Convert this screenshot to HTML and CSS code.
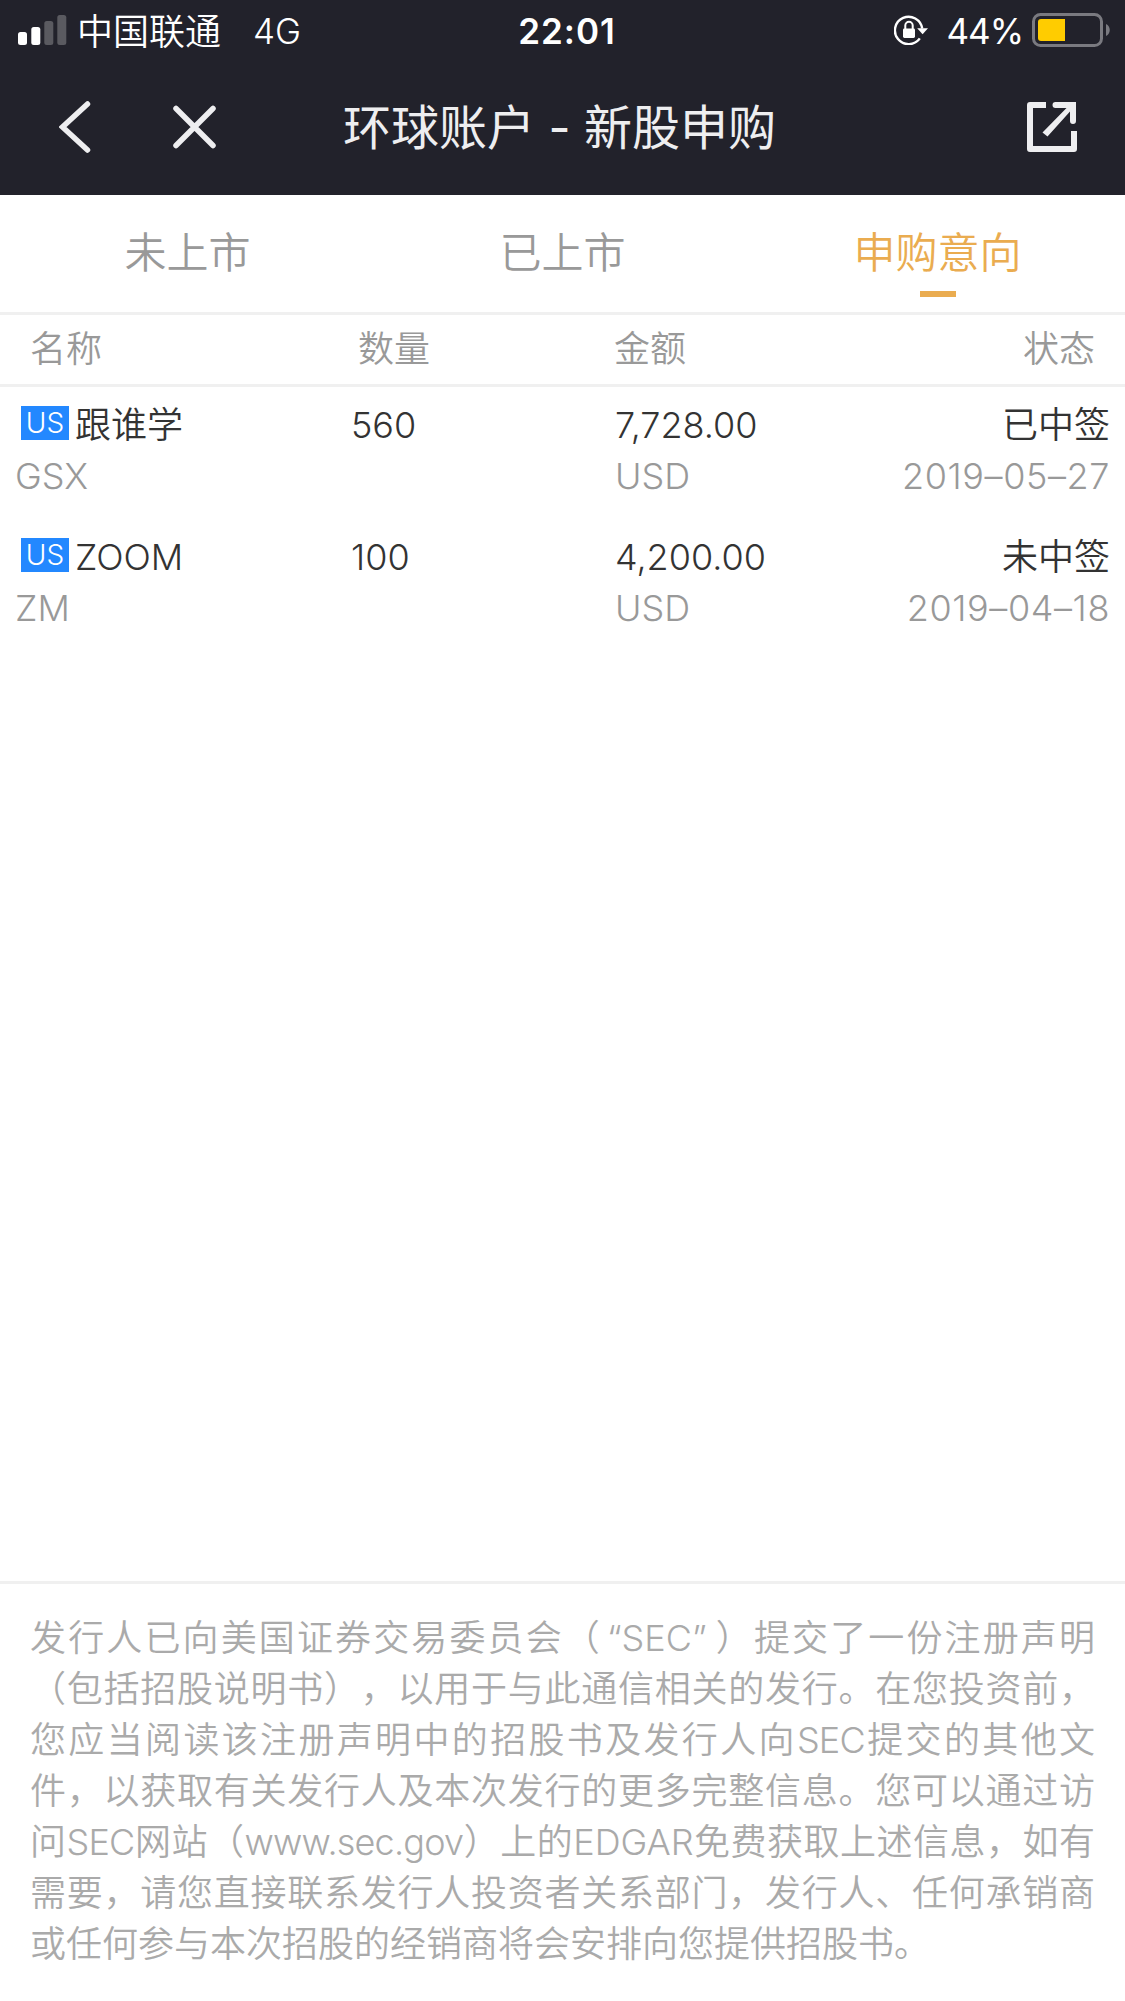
FILE: index.html
```html
<!DOCTYPE html>
<html lang="zh-CN">
<head>
    <meta charset="UTF-8">
    <title>环球账户 - 新股申购</title>
    <link rel="stylesheet" href="styles.css">
</head>
<body>
<div class="page">
    <div class="top">
        <div class="status">
            <div class="status-left">
                <svg class="signal" width="49" height="30" viewBox="0 0 49 30">
                    <rect x="0" y="17" width="9" height="13" rx="2.5" fill="#fff"/>
                    <rect x="13.3" y="12" width="9" height="18" rx="2.5" fill="#fff"/>
                    <rect x="26.3" y="6" width="9" height="24" rx="2.5" fill="#5a5a60"/>
                    <rect x="39.3" y="0" width="9" height="30" rx="2.5" fill="#5a5a60"/>
                </svg>
                <span class="carrier">中国联通</span>
                <span class="net">4G</span>
            </div>
            <div class="clock">22:01</div>
            <div class="status-right">
                <svg class="lock" width="34" height="30" viewBox="0 0 34 30">
                    <path d="M28.2 13.5A13.7 13.7 0 1 0 25.8 23.4" fill="none" stroke="#fff" stroke-width="2.4"/>
                    <path d="M23.2 13.2H34L28.6 19.2Z" fill="#fff"/>
                    <rect x="9" y="13.6" width="12" height="9.4" rx="1.4" fill="#fff"/>
                    <path d="M11.3 14V10.5a3.7 3.7 0 0 1 7.4 0V14" fill="none" stroke="#fff" stroke-width="2"/>
                </svg>
                <span class="percent">44%</span>
                <svg class="battery" width="78" height="34" viewBox="0 0 78 34">
                    <rect x="1.5" y="1.5" width="68" height="31" rx="7" fill="none" stroke="#7a7a80" stroke-width="3"/>
                    <path d="M9 6H33V28H9a3 3 0 0 1-3-3V9a3 3 0 0 1 3-3Z" fill="#ffcc00"/>
                    <path d="M74 11c5 2 5 10 0 12Z" fill="#7a7a80"/>
                </svg>
            </div>
        </div>
        <div class="nav">
            <svg class="back" width="32" height="52" viewBox="0 0 32 52">
                <path d="M28.5 3L3.5 26L28.5 49" fill="none" stroke="#eeeef0" stroke-width="5.5" stroke-linecap="round"/>
            </svg>
            <svg class="close" width="44" height="44" viewBox="0 0 44 44">
                <path d="M3 3.5L40 40.5M40 3.5L3 40.5" fill="none" stroke="#eeeef0" stroke-width="5.5" stroke-linecap="round"/>
            </svg>
            <h1>环球账户 - 新股申购</h1>
            <svg class="share" width="50" height="50" viewBox="0 0 50 50">
                <path d="M19 3H3V47H47V29" fill="none" stroke="#eeeef0" stroke-width="6" stroke-linejoin="round"/>
                <path d="M28.5 0H49V19a3 3 0 0 1-6 0V9.5L20.5 34.5L15.5 30.5L39.5 6H28.5a3 3 0 0 1 0-6Z" fill="#eeeef0"/>
            </svg>
        </div>
    </div>

    <ul class="tabs">
        <li>未上市</li>
        <li>已上市</li>
        <li class="current">申购意向</li>
    </ul>

    <div class="thead">
        <span>名称</span>
        <span>数量</span>
        <span>金额</span>
        <span class="right">状态</span>
    </div>

    <ul class="list">
        <li>
            <div>
                <p class="name"><i class="us">US</i>跟谁学</p>
                <p class="sub">GSX</p>
            </div>
            <div><p>560</p></div>
            <div>
                <p>7,728.00</p>
                <p class="sub">USD</p>
            </div>
            <div class="right">
                <p>已中签</p>
                <p class="sub date">2019–05–27</p>
            </div>
        </li>
        <li>
            <div>
                <p class="name"><i class="us">US</i>ZOOM</p>
                <p class="sub">ZM</p>
            </div>
            <div><p>100</p></div>
            <div>
                <p>4,200.00</p>
                <p class="sub">USD</p>
            </div>
            <div class="right">
                <p>未中签</p>
                <p class="sub date">2019–04–18</p>
            </div>
        </li>
    </ul>

    <div class="notice">
        <span>发行人已向美国证券交易委员会（<em class="quote">“SEC”</em>）提交了一份注册声明</span>
        <span>（包括招股说明书），以用于与此通信相关的发行。在您投资前，</span>
        <span>您应当阅读该注册声明中的招股书及发行人向<em>SEC</em>提交的其他文</span>
        <span>件，以获取有关发行人及本次发行的更多完整信息。您可以通过访</span>
        <span>问<em>SEC</em>网站（<em>www.sec.gov</em>）上的EDGAR免费获取上述信息，如有</span>
        <span>需要，请您直接联系发行人投资者关系部门，发行人、任何承销商</span>
        <span class="last">或任何参与本次招股的经销商将会安排向您提供招股书。</span>
    </div>
</div>
</body>
</html>
```
FILE: styles.css
```css
body, ul, li, p, h1 {
    margin: 0;
    padding: 0;
    list-style: none;
}

body {
    background: #fff;
    color: #333;
    font-family: Inter, "Noto Sans CJK SC", sans-serif;
    font-size: 36px;
    font-weight: 350;
    line-height: 51px;
}

svg {
    display: block;
    flex: none;
}

.page {
    width: 1125px;
    height: 2001px;
    display: flex;
    flex-direction: column;
    overflow: hidden;
}

/* 顶部 */
.top {
    height: 195px;
    background: #22222b;
    color: #fff;
}

.status {
    height: 60px;
    display: grid;
    grid-template-columns: 1fr auto 1fr;
    align-items: center;
    padding: 0 15px 0 18px;
    font-size: 35px;
    font-weight: 400;
}

.status-left, .status-right {
    display: flex;
    align-items: center;
}

.status-right {
    justify-content: flex-end;
}

.carrier {
    margin-left: 10px;
    padding-top: 4px;
    font-size: 36px;
    font-weight: 350;
}

.net {
    margin-left: 32px;
    padding-top: 3px;
    font-weight: 350;
}

.clock {
    padding: 3px 0 0 6px;
    font-weight: 600;
    letter-spacing: 1px;
}

.percent {
    margin: 0 9px 0 18px;
    padding-top: 3px;
    letter-spacing: -1px;
}

.nav {
    height: 135px;
    display: flex;
    align-items: center;
    padding: 0 48px 2px 59px;
    box-sizing: border-box;
}

.close {
    margin-left: 82px;
}

.nav h1 {
    flex: 1;
    padding: 1px 0 0 126px;
    color: #eeeef0;
    font-size: 48px;
    font-weight: 400;
    white-space: nowrap;
}

/* 选项卡 */
.tabs {
    height: 117px;
    display: flex;
    border-bottom: 3px solid #f0f0f0;
    color: #999;
    font-size: 42px;
}

.tabs li {
    flex: 1;
    display: flex;
    flex-direction: column;
    align-items: center;
    padding-top: 32px;
}

.tabs .current {
    color: #eaac50;
}

.tabs .current::after {
    content: "";
    width: 36px;
    height: 6px;
    margin-top: 13px;
    background: #eaac50;
}

/* 表头 */
.thead {
    height: 69px;
    display: grid;
    grid-template-columns: 328px 256px 1fr auto;
    align-items: center;
    padding: 0 30px;
    border-bottom: 3px solid #f0f0f0;
    color: #999;
}

.right {
    text-align: right;
}

/* 列表 */
.list {
    flex: 1;
}

.list li {
    height: 132px;
    display: grid;
    grid-template-columns: 336px 264px 1fr auto;
    padding: 13px 15px 0;
    box-sizing: border-box;
}

.list p {
    height: 51px;
}

.list .sub {
    color: #999;
    font-weight: 300;
}

.list .date {
    letter-spacing: 0.6px;
}

.name {
    display: flex;
}

.us {
    width: 48px;
    height: 34px;
    margin: 6px 6px 0 6px;
    background: #2388ff;
    color: #fff;
    font-size: 28px;
    font-style: normal;
    font-weight: 300;
    line-height: 34px;
    text-align: center;
}

/* 底部声明 */
.notice {
    height: 388px;
    padding: 29px 30px 0;
    border-top: 3px solid #f0f0f0;
    color: #aaa;
    text-spacing-trim: space-all;
}

.notice span {
    display: block;
    white-space: nowrap;
    text-align: justify;
    text-align-last: justify;
}

.notice em {
    font-style: normal;
    letter-spacing: -0.8px;
}

.notice .quote {
    padding: 0 7px 0 5px;
    letter-spacing: 0;
}

.notice .last {
    text-align-last: left;
}
```
